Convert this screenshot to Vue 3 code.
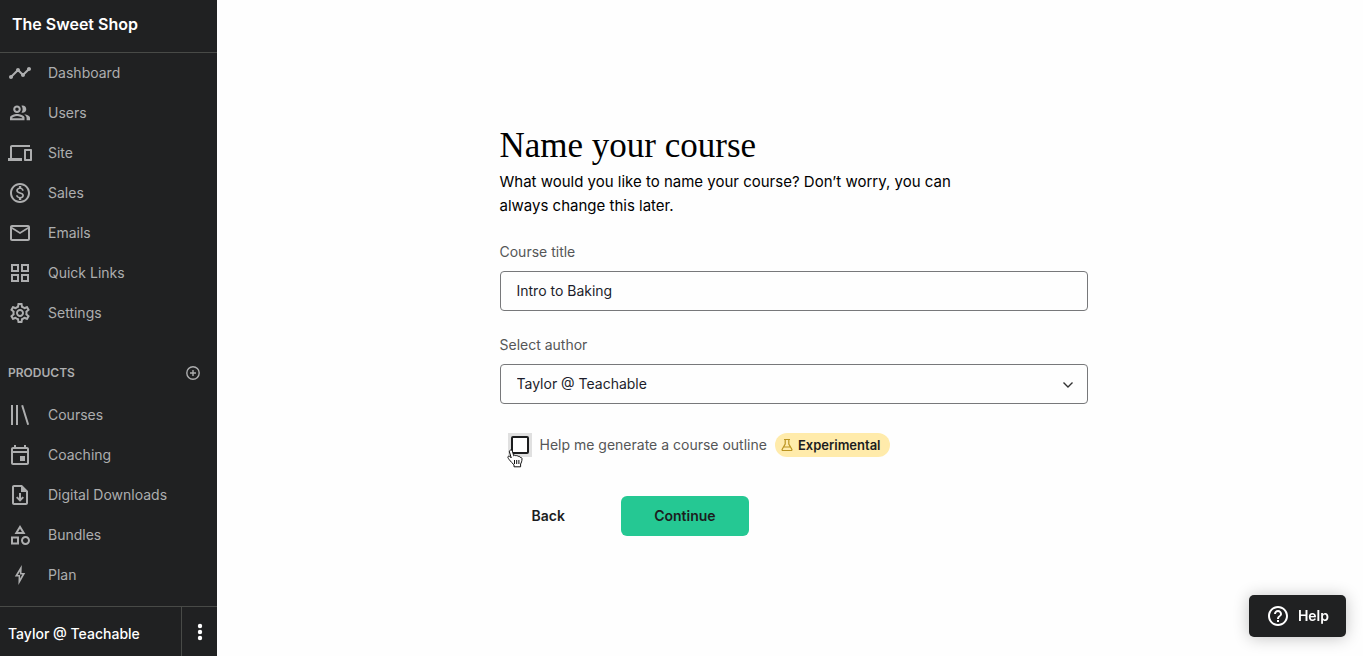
<script setup>
import { ref } from 'vue'

const mainLinks = [
  { label: 'Dashboard', path: 'M23 8c0 1.1-.9 2-2 2-.18 0-.35-.02-.51-.07l-3.56 3.55c.05.16.07.34.07.52 0 1.1-.9 2-2 2s-2-.9-2-2c0-.18.02-.36.07-.52l-2.55-2.55c-.16.05-.34.07-.52.07s-.36-.02-.52-.07l-4.55 4.56c.05.16.07.33.07.51 0 1.1-.9 2-2 2s-2-.9-2-2 .9-2 2-2c.18 0 .35.02.51.07l4.56-4.55C8.02 9.36 8 9.18 8 9c0-1.1.9-2 2-2s2 .9 2 2c0 .18-.02.36-.07.52l2.55 2.55c.16-.05.34-.07.52-.07s.36.02.52.07l3.55-3.56C19.02 8.35 19 8.18 19 8c0-1.1.9-2 2-2s2 .9 2 2z' },
  { label: 'Users', path: 'M16.3 13.4C17.7 14.2 18.6 15.3 18.6 17v2.200H22v-2.500c0-2-3-3.100-5.700-3.300zM14.600 11.800c2.050 0 3.700-1.600 3.700-3.600s-1.650-3.600-3.700-3.600c-.4 0-.8.1-1.200.2C14.100 5.700 14.600 6.900 14.600 8.200s-.5 2.500-1.200 3.400c.4.1.8.2 1.200.2zM9 12c2.090 0 3.800-1.700 3.800-3.800S11.090 4.400 9 4.400 5.200 6.100 5.200 8.200 6.910 12 9 12zm0-5.500c.95 0 1.700.75 1.700 1.700S9.950 9.900 9 9.900 7.300 9.150 7.300 8.200 8.050 6.500 9 6.500zM9 12.900c-2.400 0-7 1.200-7 3.700v2.600h14.500v-2.600c0-2.500-5.100-3.700-7.500-3.700zm5.300 4.300H4.200v-.3C4.500 16.200 7 15.100 9 15.100s5 1.100 5.300 1.800v.3z' },
  { label: 'Site', path: 'M4 6h18V4H4c-1.1 0-2 .9-2 2v11H0v3h14v-3H4V6zm19 2h-6c-.55 0-1 .45-1 1v10c0 .55.45 1 1 1h6c.55 0 1-.45 1-1V9c0-.55-.45-1-1-1zm-1 10h-4v-8h4v8z' },
  { label: 'Sales', path: 'M12 2C6.48 2 2 6.48 2 12s4.48 10 10 10 10-4.48 10-10S17.52 2 12 2zm0 18c-4.41 0-8-3.59-8-8s3.59-8 8-8 8 3.59 8 8-3.59 8-8 8zm.31-8.86c-1.77-.45-2.34-.94-2.34-1.67 0-.84.79-1.43 2.1-1.43 1.38 0 1.9.66 1.94 1.64h1.71c-.05-1.34-.87-2.57-2.49-2.97V5H10.9v1.69c-1.51.32-2.72 1.3-2.72 2.81 0 1.79 1.49 2.69 3.66 3.21 1.95.46 2.34 1.15 2.34 1.87 0 .53-.39 1.39-2.1 1.39-1.6 0-2.23-.72-2.32-1.64H8.04c.1 1.7 1.36 2.66 2.86 2.97V19h2.34v-1.67c1.52-.29 2.72-1.16 2.73-2.77-.01-2.2-1.9-2.96-3.66-3.42z' },
  { label: 'Emails', path: 'M20 4H4c-1.1 0-1.99.9-1.99 2L2 18c0 1.1.9 2 2 2h16c1.1 0 2-.9 2-2V6c0-1.1-.9-2-2-2zm0 14H4V8l8 5 8-5v10zm-8-7L4 6h16l-8 5z' },
  { label: 'Quick Links', path: 'M3 3v8h8V3H3zm6 6H5V5h4v4zm-6 4v8h8v-8H3zm6 6H5v-4h4v4zm4-16v8h8V3h-8zm6 6h-4V5h4v4zm-6 4v8h8v-8h-8zm6 6h-4v-4h4v4z' },
  { label: 'Settings', path: 'M19.43 12.98c.04-.32.07-.64.07-.98s-.03-.66-.07-.98l2.11-1.65c.19-.15.24-.42.12-.64l-2-3.46c-.09-.16-.26-.25-.44-.25-.06 0-.12.01-.17.03l-2.49 1c-.52-.4-1.08-.73-1.69-.98l-.38-2.65C14.46 2.18 14.25 2 14 2h-4c-.25 0-.46.18-.49.42l-.38 2.65c-.61.25-1.17.59-1.69.98l-2.49-1c-.06-.02-.12-.03-.18-.03-.17 0-.34.09-.43.25l-2 3.46c-.13.22-.07.49.12.64l2.11 1.65c-.04.32-.07.65-.07.98s.03.66.07.98l-2.11 1.65c-.19.15-.24.42-.12.64l2 3.46c.09.16.26.25.44.25.06 0 .12-.01.17-.03l2.49-1c.52.4 1.08.73 1.69.98l.38 2.65c.03.24.24.42.49.42h4c.25 0 .46-.18.49-.42l.38-2.65c.61-.25 1.17-.59 1.69-.98l2.49 1c.06.02.12.03.18.03.17 0 .34-.09.43-.25l2-3.46c.12-.22.07-.49-.12-.64l-2.11-1.65zm-1.98-1.71c.04.31.05.52.05.73 0 .21-.02.43-.05.73l-.14 1.13.89.7 1.08.84-.7 1.21-1.27-.51-1.04-.42-.9.68c-.43.32-.84.56-1.25.73l-1.06.43-.16 1.13-.2 1.35h-1.4l-.19-1.35-.16-1.13-1.06-.43c-.43-.18-.83-.41-1.23-.71l-.91-.7-1.06.43-1.27.51-.7-1.21 1.08-.84.89-.7-.14-1.13c-.03-.31-.05-.54-.05-.74s.02-.43.05-.73l.14-1.13-.89-.7-1.08-.84.7-1.21 1.27.51 1.04.42.9-.68c.43-.32.84-.56 1.25-.73l1.06-.43.16-1.13.2-1.35h1.39l.19 1.35.16 1.13 1.06.43c.43.18.83.41 1.23.71l.91.7 1.06-.43 1.27-.51.7 1.21-1.07.85-.89.7.14 1.13zM12 8c-2.21 0-4 1.79-4 4s1.79 4 4 4 4-1.79 4-4-1.79-4-4-4zm0 6c-1.1 0-2-.9-2-2s.9-2 2-2 2 .9 2 2-.9 2-2 2z' },
]

const productLinks = [
  { label: 'Courses', path: 'M3 2h2v20H3zM8 2h2v20H8zM13.2 2.6l1.9-.5 6 19.3-1.9.5z' },
  { label: 'Coaching', path: 'M19 4h-1V2h-2v2H8V2H6v2H5c-1.11 0-1.99.9-1.99 2L3 20c0 1.1.89 2 2 2h14c1.1 0 2-.9 2-2V6c0-1.1-.9-2-2-2zm0 16H5V10h14v10zm0-12H5V6h14v2zm-7 5h5v5h-5z' },
  { label: 'Digital Downloads', path: 'M14 2H6c-1.1 0-2 .9-2 2v16c0 1.1.9 2 2 2h12c1.1 0 2-.9 2-2V8l-6-6zm4 18H6V4h7v5h5v11zM11 10h2v5l1.6-1.6L16 14.8l-4 4-4-4 1.4-1.4L11 15z' },
  { label: 'Bundles', path: 'M12 2l-5.5 9h11L12 2zm0 3.84L13.93 9h-3.87L12 5.84zM17.5 13c-2.49 0-4.5 2.01-4.5 4.5s2.01 4.5 4.5 4.5 4.5-2.01 4.5-4.5-2.01-4.5-4.5-4.5zm0 7c-1.38 0-2.5-1.12-2.5-2.5s1.12-2.5 2.5-2.5 2.5 1.12 2.5 2.5-1.12 2.5-2.5 2.5zM3 21.5h8v-8H3v8zm2-6h4v4H5v-4z' },
  { label: 'Plan', path: 'M13.8 2L6.800 13.600h3.800L10.400 22 17.200 10h-3.700L13.800 2zm-1.900 6.500v3.100h2.400l-2.200 4v-3.600H9.800z' },
]

const title = ref('Intro to Baking')
const author = ref('Taylor @ Teachable')
const outline = ref(false)
</script>

<template>
  <div class="app">
    <aside class="sidebar">
      <header class="school">The Sweet Shop</header>
      <nav class="nav">
        <a v-for="l in mainLinks" :key="l.label" href="#" class="nav-link">
          <svg class="icon" viewBox="0 0 24 24"><path :d="l.path" /></svg>
          <span>{{ l.label }}</span>
        </a>
      </nav>
      <div class="section">
        <h2 class="section-title">PRODUCTS</h2>
        <button type="button" class="add" aria-label="Add product">
          <svg viewBox="0 0 16 16"><circle cx="8" cy="8" r="6.2" /><path d="M8 5v6M5 8h6" /></svg>
        </button>
      </div>
      <nav class="nav">
        <a v-for="l in productLinks" :key="l.label" href="#" class="nav-link">
          <svg class="icon" viewBox="0 0 24 24"><path fill-rule="evenodd" :d="l.path" /></svg>
          <span>{{ l.label }}</span>
        </a>
      </nav>
      <footer class="account">
        <a href="#" class="account-name">Taylor @ Teachable</a>
        <button type="button" class="more" aria-label="Account menu">
          <svg viewBox="0 0 6 18"><circle cx="3" cy="3" r="2.2" /><circle cx="3" cy="9" r="2.2" /><circle cx="3" cy="15" r="2.2" /></svg>
        </button>
      </footer>
    </aside>

    <main class="main">
      <form class="form" @submit.prevent>
        <h1 class="heading">Name your course</h1>
        <p class="intro">What would you like to name your course? Don’t worry, you can always change this later.</p>

        <div class="field">
          <label for="title">Course title</label>
          <input id="title" v-model="title" type="text" class="control" />
        </div>

        <div class="field">
          <label for="author">Select author</label>
          <div class="select-wrap">
            <select id="author" v-model="author" class="control">
              <option>Taylor @ Teachable</option>
            </select>
            <svg class="chevron" viewBox="0 0 12 8"><path d="M1.5 1.5L6 6l4.500-4.500" /></svg>
          </div>
        </div>

        <div class="outline-row">
          <span class="check-wrap">
            <input id="outline" v-model="outline" type="checkbox" class="check" />
            <svg class="pointer" viewBox="0 0 16 19">
              <path d="M3.200 1.200c1-.5 1.900.1 2.200 1l1.300 4.600c.4-.8 1.800-.8 2.200.2.500-.7 1.900-.6 2.200.5.600-.5 2-.3 2.200 1 .8-.3 1.700.2 1.700 1.300 0 2.500-.8 4-1.400 5.200v2.800H7v-2c-1.500-1.300-3.300-3.300-4.800-5.200-1.300-1.700-1.700-2.500-1-3.200.8-.7 1.900 0 3 1.400L2.400 2.800c-.2-.7.100-1.300.8-1.600z" />
              <path d="M7.500 11v4M9.700 11v4M11.900 11v4" />
            </svg>
          </span>
          <label for="outline" class="check-label">Help me generate a course outline</label>
          <span class="badge">
            <svg viewBox="0 0 12 14"><path d="M3 1.500h6M4.200 1.500v4.600L1.200 11.200c-.4.800 0 1.300.7 1.300h8.200c.7 0 1.100-.5.700-1.300L7.800 6.100V1.500M3 9h6" /></svg>
            Experimental
          </span>
        </div>

        <div class="actions">
          <button type="button" class="btn">Back</button>
          <button type="submit" class="btn primary">Continue</button>
        </div>
      </form>
    </main>

    <button type="button" class="help">
      <svg viewBox="0 0 24 24"><path d="M11 18h2v-2h-2v2zm1-16C6.480 2 2 6.480 2 12s4.480 10 10 10 10-4.480 10-10S17.520 2 12 2zm0 18c-4.410 0-8-3.590-8-8s3.590-8 8-8 8 3.590 8 8-3.590 8-8 8zm0-14c-2.210 0-4 1.790-4 4h2c0-1.100.9-2 2-2s2 .9 2 2c0 2-3 1.750-3 5h2c0-2.250 3-2.500 3-5 0-2.210-1.790-4-4-4z" /></svg>
      Help
    </button>
  </div>
</template>

<style>
body {
  background: #fefefe;
}
</style>

<style scoped>
.app {
  display: flex;
  min-height: 100vh;
  font-family: Inter, "Liberation Sans", sans-serif;
  font-size: 14px;
  line-height: 20px;
  color: #000;
}
.app *,
.app {
  box-sizing: border-box;
}
button,
input,
select {
  font: inherit;
  color: inherit;
}
button {
  border: 0;
  padding: 0;
  background: none;
  cursor: pointer;
}
a {
  color: inherit;
  text-decoration: none;
}
.sidebar {
  display: flex;
  flex-direction: column;
  flex: none;
  width: 217px;
  background: #202122;
  color: #adaeaf;
}
.school {
  padding: 14px 12px 18px;
  border-bottom: 1px solid #484a47;
  font-size: 16px;
  font-weight: 600;
  color: #fff;
}
.nav {
  display: flex;
  flex-direction: column;
}
.nav-link {
  display: flex;
  align-items: center;
  gap: 16px;
  height: 40px;
  padding: 0 8px;
}
.icon {
  flex: none;
  width: 24px;
  height: 24px;
  fill: currentColor;
}
.section {
  display: flex;
  align-items: center;
  justify-content: space-between;
  margin-top: 20px;
  padding: 10px 16px 12px 8px;
}
.section-title {
  margin: 0;
  font-size: 12px;
  line-height: 20px;
  font-weight: 600;
}
.add svg {
  display: block;
  width: 16px;
  height: 16px;
  fill: none;
  stroke: currentColor;
  stroke-width: 1.4;
}
.account {
  display: flex;
  margin-top: auto;
  border-top: 1px solid #484a47;
  color: #fff;
}
.account-name {
  flex: 1;
  padding: 17px 8px 12px;
  font-weight: 500;
}
.more {
  display: flex;
  align-items: center;
  justify-content: center;
  width: 36px;
  border-left: 1px solid #484a47;
}
.more svg {
  width: 6px;
  height: 18px;
  fill: #fff;
}
.main {
  display: flex;
  flex: 1;
  align-items: center;
  padding: 5px 24px 0 31px;
}
.form {
  width: 100%;
  max-width: 588px;
  margin: 0 auto;
}
.heading {
  margin: 0;
  font-family: "Liberation Serif", serif;
  font-size: 35px;
  line-height: 40px;
  font-weight: 400;
}
.intro {
  max-width: 480px;
  margin: 4px 0 24px;
  font-size: 15px;
  line-height: 24px;
}
.field {
  display: flex;
  flex-direction: column;
  gap: 9px;
  margin-bottom: 24px;
}
.field label,
.check-label {
  color: #555657;
}
.control {
  display: block;
  width: 100%;
  height: 40px;
  padding: 0 16px;
  border: 1px solid #77787a;
  border-radius: 4px;
  background: #fefefe;
  color: #1c1d2b;
  appearance: none;
}
.select-wrap {
  position: relative;
}
.chevron {
  position: absolute;
  right: 14px;
  top: 17px;
  width: 12px;
  height: 8px;
  fill: none;
  stroke: #333;
  stroke-width: 1.4;
  pointer-events: none;
}
.outline-row {
  display: flex;
  align-items: center;
  gap: 8px;
  margin-top: 29px;
  padding-left: 8px;
}
.check-wrap {
  position: relative;
  display: flex;
  padding: 3px;
  background: #e0e0e0;
}
.check {
  width: 18px;
  height: 18px;
  margin: 0;
  border: 2px solid #1c1d1e;
  border-radius: 2px;
  background: #fff;
  appearance: none;
}
.check:checked {
  background: #1c1d1e;
}
.pointer {
  position: absolute;
  left: -1px;
  top: 16px;
  width: 16px;
  height: 19px;
  fill: #fff;
  stroke: #111;
  stroke-width: 1;
  pointer-events: none;
}
.badge {
  display: flex;
  align-items: center;
  gap: 5px;
  height: 24px;
  padding: 0 9px 0 6px;
  border-radius: 12px;
  background: #ffebab;
  color: #1c1d1e;
  font-size: 13px;
  font-weight: 600;
}
.badge svg {
  width: 12px;
  height: 14px;
  fill: none;
  stroke: #bb9420;
  stroke-width: 1.2;
}
.actions {
  display: flex;
  gap: 24px;
  margin-top: 39px;
}
.btn {
  height: 40px;
  padding: 0 32px;
  border-radius: 6px;
  color: #1c1d1e;
  font-weight: 600;
}
.primary {
  min-width: 128px;
  background: #25c893;
}
.help {
  position: fixed;
  right: 17px;
  bottom: 19px;
  display: flex;
  align-items: center;
  gap: 8px;
  height: 42px;
  padding: 0 17px;
  border-radius: 5px;
  background: #202122;
  box-shadow: 0 1px 16px rgba(0, 0, 0, 0.24);
  color: #fff;
  font-weight: 600;
}
.help svg {
  width: 24px;
  height: 24px;
  fill: #fff;
}
</style>
